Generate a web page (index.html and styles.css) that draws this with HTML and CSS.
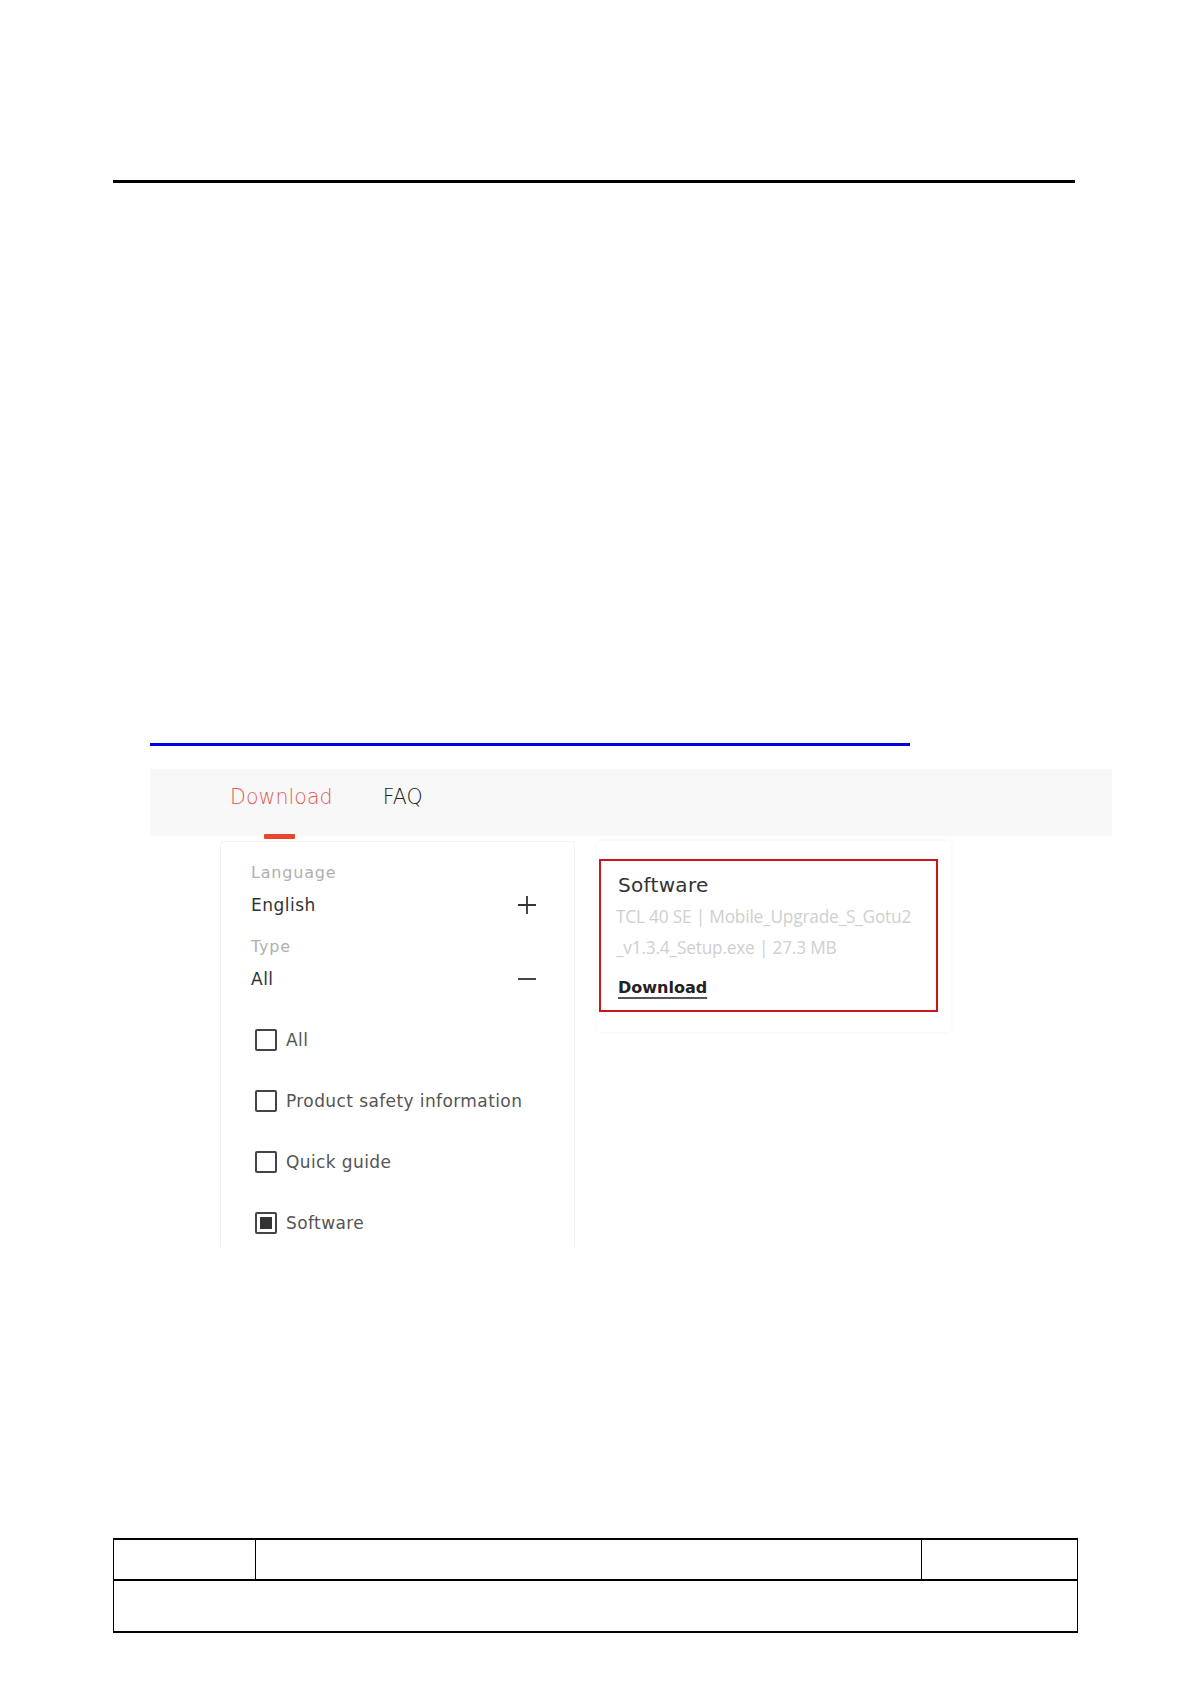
FILE: index.html
```html
<!DOCTYPE html>
<html lang="en">
<head>
    <meta charset="UTF-8" />
    <meta name="viewport" content="width=device-width, initial-scale=1.0" />
    <link rel="stylesheet" href="styles.css">
    <title>Download - Software</title>
</head>
<body>
    <div class="page">
        <header class="page-header"></header>

        <section class="shot">
            <div class="link-line"></div>

            <nav class="tabs">
                <a class="tab active">Download</a>
                <a class="tab">FAQ</a>
            </nav>

            <div class="content">
                <aside class="filters">
                    <div class="filter-group">
                        <div class="filter-label">Language</div>
                        <div class="filter-value">
                            <span>English</span>
                            <svg class="toggle" width="20" height="20" viewBox="0 0 20 20">
                                <path d="M10 1v18M1 10h18" stroke="#333" stroke-width="1.8" fill="none" />
                            </svg>
                        </div>
                    </div>
                    <div class="filter-group">
                        <div class="filter-label">Type</div>
                        <div class="filter-value">
                            <span>All</span>
                            <svg class="toggle" width="20" height="20" viewBox="0 0 20 20">
                                <path d="M1 10h18" stroke="#333" stroke-width="1.8" fill="none" />
                            </svg>
                        </div>
                    </div>

                    <ul class="type-list">
                        <li><span class="check"></span>All</li>
                        <li><span class="check"></span>Product safety information</li>
                        <li><span class="check"></span>Quick guide</li>
                        <li><span class="check checked"></span>Software</li>
                    </ul>
                </aside>

                <div class="file-card">
                    <div class="highlight">
                        <div class="file-title">Software</div>
                        <div class="file-meta">TCL 40 SE | Mobile_Upgrade_S_Gotu2<br>_v1.3.4_Setup.exe | 27.3 MB</div>
                        <a class="file-download">Download</a>
                    </div>
                </div>
            </div>
        </section>

        <table class="page-footer">
            <tr>
                <td class="cell-a"></td>
                <td class="cell-b"></td>
                <td class="cell-c"></td>
            </tr>
            <tr>
                <td class="cell-wide" colspan="3"></td>
            </tr>
        </table>
    </div>
</body>
</html>
```

FILE: styles.css
```css
* {
    box-sizing: border-box;
    margin: 0;
    padding: 0;
}
body {
    background-color: #fff;
    font-family: "DejaVu Sans", sans-serif;
    color: #333;
}
.page {
    width: 1191px;
    height: 1684px;
    overflow: hidden;
}
.page-header {
    height: 183px;
    margin: 0 116px 0 113px;
    border-bottom: 3px solid #000;
}
.shot {
    margin-top: 560px;
    margin-left: 150px;
}
.link-line {
    width: 760px;
    height: 3px;
    background-color: #0000e6;
}
.tabs {
    position: relative;
    display: flex;
    align-items: center;
    gap: 50px;
    width: 962px;
    height: 67px;
    margin-top: 23px;
    padding-left: 80px;
    padding-bottom: 12px;
    background-color: #f8f8f8;
}
.tab {
    font-size: 20.5px;
    font-weight: 300;
    color: #222;
    position: relative;
    letter-spacing: 0.1px;
}
.tab.active {
    color: #e05a55;
}
.tab.active::after {
    content: "";
    position: absolute;
    left: 50%;
    bottom: -30px;
    width: 31px;
    height: 5px;
    margin-left: -17px;
    background-color: #e8472f;
    border-radius: 1px;
}
.content {
    display: flex;
    align-items: flex-start;
    gap: 22px;
    margin-top: 5px;
    margin-left: 70px;
}
.filters {
    width: 355px;
    height: 406px;
    padding: 21px 37px 0 30px;
    background-color: #fff;
    border: 1px solid #f1f1f1;
    border-bottom: none;
    border-radius: 4px 4px 0 0;
}
.filter-group + .filter-group {
    margin-top: 20px;
}
.filter-label {
    font-size: 16px;
    line-height: 20px;
    color: #b0b0b0;
    letter-spacing: 0.8px;
}
.filter-value {
    display: flex;
    justify-content: space-between;
    align-items: center;
    margin-top: 10px;
    font-size: 17px;
    line-height: 24px;
    color: #333;
    letter-spacing: 0.5px;
}
.type-list {
    list-style: none;
    display: flex;
    flex-direction: column;
    gap: 39px;
    margin-top: 38px;
}
.type-list li {
    display: flex;
    align-items: center;
    gap: 9px;
    height: 22px;
    padding-left: 4px;
    font-size: 17px;
    color: #555;
    letter-spacing: 0.4px;
}
.check {
    width: 22px;
    height: 22px;
    border: 2px solid #444;
    border-radius: 2px;
    flex-shrink: 0;
}
.check.checked {
    padding: 3px;
    background-clip: content-box;
    background-color: #333;
}
.file-card {
    width: 354px;
    height: 191px;
    padding: 18px 13px 0 2px;
    background-color: #fff;
    border-radius: 4px;
    box-shadow: 0 0 4px rgba(0, 0, 0, 0.06);
}
.highlight {
    height: 153px;
    padding: 12px 14px 0 17px;
    border: 2px solid #c8161d;
}
.file-title {
    font-size: 20px;
    line-height: 24px;
    color: #333;
    letter-spacing: 0.3px;
}
.file-meta {
    margin-top: 4px;
    margin-left: -2px;
    font-family: "Open Sans", sans-serif;
    font-size: 17.3px;
    line-height: 31px;
    color: #cfcfcf;
    letter-spacing: -0.2px;
    white-space: nowrap;
}
.file-download {
    display: inline-block;
    margin-top: 14px;
    font-size: 16px;
    font-weight: bold;
    line-height: 22px;
    color: #222;
    text-decoration: underline;
    text-decoration-thickness: 2px;
    text-underline-offset: 4px;
    text-decoration-color: #555;
}
.page-footer {
    width: 965px;
    height: 95px;
    margin-top: 291px;
    margin-left: 113px;
    border-collapse: collapse;
}
.page-footer td {
    border: 1px solid #000;
}
.page-footer tr:first-child td {
    height: 41px;
    border-top-width: 2px;
    border-bottom-width: 2px;
}
.cell-a {
    width: 142px;
}
.cell-c {
    width: 156px;
}
.cell-wide {
    border-bottom-width: 2px !important;
}
```
